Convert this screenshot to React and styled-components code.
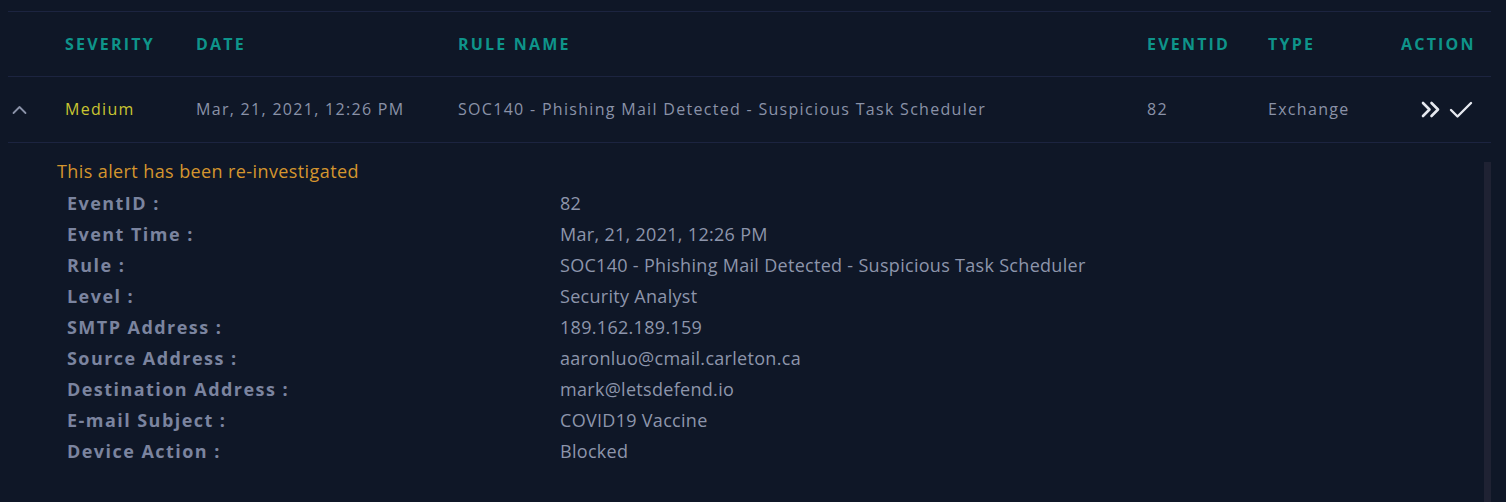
import React from "react";
import styled, { createGlobalStyle } from "styled-components";

const GlobalStyle = createGlobalStyle`
  html, body {
    margin: 0;
    padding: 0;
    background: #0f1727;
  }
  body {
    font-family: "Open Sans", "DejaVu Sans", sans-serif;
  }
`;

const COLS = "49px 131px 262px 689px 121px 133px 98px";

const Page = styled.div`
  width: 1506px;
  height: 502px;
  overflow: hidden;
  background: #0f1727;
  padding: 11px 15px 0 8px;
  box-sizing: border-box;
`;

const Table = styled.div`
  border-top: 1px solid #1c2440;
`;

const HeaderRow = styled.div`
  display: grid;
  grid-template-columns: ${COLS};
  height: 64px;
  align-items: center;
  border-bottom: 1px solid #1c2440;
`;

const HeadCell = styled.div`
  padding: 0 8px;
  color: #0e948a;
  font-weight: 700;
  font-size: 16px;
  letter-spacing: 2.2px;
  text-transform: uppercase;
  white-space: nowrap;
  text-align: ${(p) => (p.$right ? "right" : "left")};
  padding-right: ${(p) => (p.$right ? "17px" : "8px")};
`;

const DataRow = styled.div`
  display: grid;
  grid-template-columns: ${COLS};
  height: 65px;
  align-items: center;
  border-bottom: 1px solid #1c2440;
`;

const Cell = styled.div`
  padding: 0 8px 2px;
  font-size: 16px;
  letter-spacing: 1.3px;
  white-space: nowrap;
  color: ${(p) => p.$color || "#8a92a8"};
`;

const ToggleCell = styled.div`
  padding-left: 4px;
  display: flex;
  align-items: center;
`;

const ActionCell = styled.div`
  display: flex;
  justify-content: flex-end;
  align-items: center;
  gap: 8px;
  padding-right: 18px;
  color: #e6e9ef;
`;

const Details = styled.div`
  display: flex;
  height: 360px;
`;

const DetailBody = styled.div`
  flex: 1;
  padding: 13px 0 0 49px;
`;

const Notice = styled.div`
  color: #d4952e;
  font-size: 18px;
  letter-spacing: 0.4px;
  line-height: 31px;
`;

const InfoList = styled.div`
  display: grid;
  grid-template-columns: 493px 1fr;
  grid-auto-rows: 31px;
  padding-left: 10px;
  align-items: center;
`;

const Label = styled.div`
  color: #7b849f;
  font-weight: 700;
  font-size: 18px;
  letter-spacing: 1.45px;
  white-space: nowrap;
`;

const Value = styled.div`
  color: #8d95ab;
  font-size: 18px;
  letter-spacing: 0.3px;
  white-space: nowrap;
`;

const ScrollTrack = styled.div`
  width: 7px;
  margin-top: 19px;
  background: #1f2233;
`;

const ChevronUp = () => (
  <svg width="15" height="10" viewBox="0 0 15 10" fill="none">
    <path d="M1.5 8 L7.5 2 L13.5 8" stroke="#8a92a8" strokeWidth="1.8" strokeLinecap="round" strokeLinejoin="round" />
  </svg>
);

const DoubleRight = () => (
  <svg width="20" height="17" viewBox="0 0 20 17" fill="none">
    <path d="M2 2 L8.5 8.5 L2 15 M10.5 2 L17 8.5 L10.5 15" stroke="currentColor" strokeWidth="2.6" strokeLinecap="round" strokeLinejoin="round" />
  </svg>
);

const Check = () => (
  <svg width="24" height="18" viewBox="0 0 24 18" fill="none">
    <path d="M2 9 L8.5 15.5 L22 2" stroke="currentColor" strokeWidth="2.4" strokeLinecap="round" strokeLinejoin="round" />
  </svg>
);

const details = [
  ["EventID :", "82"],
  ["Event Time :", "Mar, 21, 2021, 12:26 PM"],
  ["Rule :", "SOC140 - Phishing Mail Detected - Suspicious Task Scheduler"],
  ["Level :", "Security Analyst"],
  ["SMTP Address :", "189.162.189.159"],
  ["Source Address :", "aaronluo@cmail.carleton.ca"],
  ["Destination Address :", "mark@letsdefend.io"],
  ["E-mail Subject :", "COVID19 Vaccine"],
  ["Device Action :", "Blocked"],
];

export default function App() {
  return (
    <>
      <GlobalStyle />
      <Page>
        <Table>
          <HeaderRow>
            <div />
            <HeadCell>Severity</HeadCell>
            <HeadCell>Date</HeadCell>
            <HeadCell>Rule Name</HeadCell>
            <HeadCell>EventID</HeadCell>
            <HeadCell>Type</HeadCell>
            <HeadCell $right>Action</HeadCell>
          </HeaderRow>
          <DataRow>
            <ToggleCell>
              <ChevronUp />
            </ToggleCell>
            <Cell $color="#c9c531">Medium</Cell>
            <Cell>Mar, 21, 2021, 12:26 PM</Cell>
            <Cell>SOC140 - Phishing Mail Detected - Suspicious Task Scheduler</Cell>
            <Cell>82</Cell>
            <Cell>Exchange</Cell>
            <ActionCell>
              <DoubleRight />
              <Check />
            </ActionCell>
          </DataRow>
          <Details>
            <DetailBody>
              <Notice>This alert has been re-investigated</Notice>
              <InfoList>
                {details.map(([k, v]) => (
                  <React.Fragment key={k}>
                    <Label>{k}</Label>
                    <Value>{v}</Value>
                  </React.Fragment>
                ))}
              </InfoList>
            </DetailBody>
            <ScrollTrack />
          </Details>
        </Table>
      </Page>
    </>
  );
}
